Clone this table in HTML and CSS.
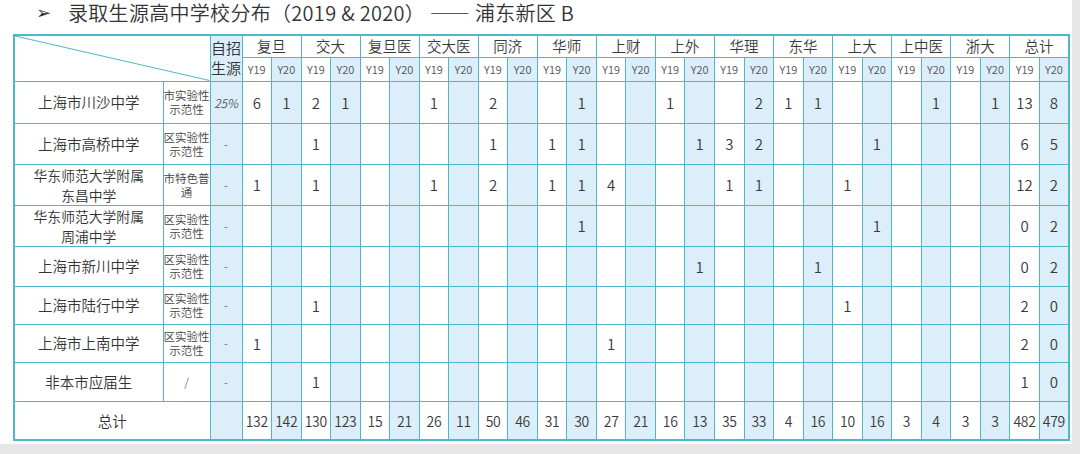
FILE: index.html
```html
<!DOCTYPE html>
<html lang="zh">
<head>
<meta charset="utf-8">
<link rel="stylesheet" href="styles.css">
</head>
<body>
<div class="slide">
  <div class="title"><span class="arrow">➢</span><span class="ttext">录取生源高中学校分布（2019 &amp; 2020） —— 浦东新区 B</span></div>
  <table class="grid">
    <colgroup>
      <col class="c-name"><col class="c-type"><col class="c-zz">
      <col class="c-y"><col class="c-y"><col class="c-y"><col class="c-y"><col class="c-y"><col class="c-y"><col class="c-y"><col class="c-y"><col class="c-y"><col class="c-y"><col class="c-y"><col class="c-y"><col class="c-y"><col class="c-y"><col class="c-y"><col class="c-y"><col class="c-y"><col class="c-y"><col class="c-y"><col class="c-y"><col class="c-y"><col class="c-y"><col class="c-y"><col class="c-y"><col class="c-y"><col class="c-y"><col class="c-y"><col class="c-y">
    </colgroup>
    <thead>
      <tr class="h1">
        <th class="corner" colspan="2" rowspan="2"><svg class="diag" viewBox="0 0 100 100" preserveAspectRatio="none"><line x1="0" y1="0" x2="100" y2="100" stroke="#4fb8c8" stroke-width="1" vector-effect="non-scaling-stroke"/></svg></th>
        <th class="zz zzh" rowspan="2">自招<br>生源</th>
        <th class="uni" colspan="2">复旦</th>
        <th class="uni" colspan="2">交大</th>
        <th class="uni" colspan="2">复旦医</th>
        <th class="uni" colspan="2">交大医</th>
        <th class="uni" colspan="2">同济</th>
        <th class="uni" colspan="2">华师</th>
        <th class="uni" colspan="2">上财</th>
        <th class="uni" colspan="2">上外</th>
        <th class="uni" colspan="2">华理</th>
        <th class="uni" colspan="2">东华</th>
        <th class="uni" colspan="2">上大</th>
        <th class="uni" colspan="2">上中医</th>
        <th class="uni" colspan="2">浙大</th>
        <th class="uni" colspan="2">总计</th>
      </tr>
      <tr class="h2" id="yrow"></tr>
    </thead>
    <tbody id="body"></tbody>
  </table>
</div>
<script src="app.js"></script>
</body>
</html>
```

FILE: app.js
```js
(function () {
  var yrow = document.getElementById('yrow');
  for (var i = 0; i < 14; i++) {
    var a = document.createElement('th'); a.className = 'yr'; a.textContent = 'Y19'; yrow.appendChild(a);
    var b = document.createElement('th'); b.className = 'yr alt'; b.textContent = 'Y20'; yrow.appendChild(b);
  }
  var rows = [
    { n: ['上海市川沙中学'], t: '市实验性<br>示范性', z: '25%', zi: true,
      v: { 0: '6', 1: '1', 2: '2', 3: '1', 6: '1', 8: '2', 11: '1', 14: '1', 17: '2', 18: '1', 19: '1', 23: '1', 25: '1', 26: '13', 27: '8' } },
    { n: ['上海市高桥中学'], t: '区实验性<br>示范性', z: '-',
      v: { 2: '1', 8: '1', 10: '1', 11: '1', 15: '1', 16: '3', 17: '2', 21: '1', 26: '6', 27: '5' } },
    { n: ['华东师范大学附属', '东昌中学'], t: '市特色普<br>通', z: '-',
      v: { 0: '1', 2: '1', 6: '1', 8: '2', 10: '1', 11: '1', 12: '4', 16: '1', 17: '1', 20: '1', 26: '12', 27: '2' } },
    { n: ['华东师范大学附属', '周浦中学'], t: '区实验性<br>示范性', z: '-',
      v: { 11: '1', 21: '1', 26: '0', 27: '2' } },
    { n: ['上海市新川中学'], t: '区实验性<br>示范性', z: '-',
      v: { 15: '1', 19: '1', 26: '0', 27: '2' } },
    { n: ['上海市陆行中学'], t: '区实验性<br>示范性', z: '-',
      v: { 2: '1', 20: '1', 26: '2', 27: '0' } },
    { n: ['上海市上南中学'], t: '区实验性<br>示范性', z: '-',
      v: { 0: '1', 12: '1', 26: '2', 27: '0' } },
    { n: ['非本市应届生'], t: '/', z: '-',
      v: { 2: '1', 26: '1', 27: '0' } }
  ];
  var body = document.getElementById('body');
  rows.forEach(function (r) {
    var tr = document.createElement('tr');
    tr.className = 'row';
    var nm = r.n.map(function (s) { return '<span class="nl">' + s + '</span>'; }).join('');
    var html = '<td class="name' + (r.n.length > 1 ? ' two' : '') + '">' + nm + '</td><td class="type' + (r.t === '/' ? ' slash' : '') + '">' + r.t + '</td>' +
      '<td class="zz' + (r.zi ? ' zzi' : ' zzd') + '">' + r.z + '</td>';
    for (var i = 0; i < 28; i++) {
      html += '<td class="num' + (i % 2 ? ' alt' : '') + '">' + (r.v[i] || '') + '</td>';
    }
    tr.innerHTML = html;
    body.appendChild(tr);
  });
  var totals = ['132','142','130','123','15','21','26','11','50','46','31','30','27','21','16','13','35','33','4','16','10','16','3','4','3','3','482','479'];
  var tr = document.createElement('tr');
  tr.className = 'row total';
  var html = '<td class="name" colspan="2">总计</td><td class="zz"></td>';
  totals.forEach(function (t, i) { html += '<td class="num' + (i % 2 ? ' alt' : '') + '">' + t + '</td>'; });
  tr.innerHTML = html;
  body.appendChild(tr);
  var hs = [42, 41, 41, 41, 40, 38, 38, 39, 39];
  var trs = body.querySelectorAll('tr');
  for (var k = 0; k < trs.length; k++) { trs[k].style.height = hs[k] + 'px'; }
})();
```

FILE: styles.css
```css
html, body {
  margin: 0;
  padding: 0;
}
body {
  width: 1080px;
  height: 454px;
  background: #e7e7e7;
  font-family: "Noto Sans CJK SC", "Noto Sans", sans-serif;
  font-weight: 350;
  color: #3a3a3a;
  overflow: hidden;
}
.slide {
  width: 1072px;
  height: 444px;
  background: #ffffff;
  padding-left: 13px;
  box-sizing: border-box;
}
.title {
  height: 34px;
  display: flex;
  align-items: flex-start;
  font-size: 20px;
  line-height: 26px;
  color: #333;
}
.arrow {
  margin-left: 23px;
  width: 32px;
  font-family: "DejaVu Sans", sans-serif;
  font-size: 18px;
  line-height: 26px;
  font-weight: normal;
}
.ttext {
  letter-spacing: 0.3px;
}
.grid {
  border-collapse: collapse;
  table-layout: fixed;
  width: 1056px;
  border: 2px solid #4fb8c8;
}
.c-name { width: 149px; }
.c-type { width: 47px; }
.c-zz { width: 32px; }
.c-y { width: 29.54px; }
.grid th, .grid td {
  border: 1px solid #4fb8c8;
  padding: 0;
  text-align: center;
  vertical-align: middle;
  font-weight: 350;
  overflow: hidden;
  white-space: nowrap;
}
.h1 { height: 22px; }
.h2 { height: 24px; }
.corner {
  position: relative;
}
.diag {
  position: absolute;
  left: 0;
  top: 0;
  width: 100%;
  height: 100%;
  display: block;
}
.uni {
  font-size: 14.5px;
  line-height: 18px;
  color: #3a3a3a;
}
.zz {
  background: #dbeef9;
}
.zzh {
  font-size: 15px;
  line-height: 20px;
  color: #333;
}
.yr {
  font-size: 11px;
  color: #555;
  line-height: 14px;
}
.alt {
  background: #dbeef9;
}
.name {
  font-size: 14.5px;
  line-height: 18px;
  color: #333;
}
.nl {
  display: block;
}
.name.two {
  font-size: 13.8px;
  line-height: 20.1px;
}
.type {
  font-size: 11.5px;
  line-height: 14px;
  color: #444;
}
.type.slash {
  font-size: 12px;
  color: #777;
}
.zzi {
  font-size: 12px;
  font-style: italic;
  color: #555;
}
.zzd {
  font-size: 11px;
  color: #666;
}
.num {
  font-size: 15px;
  color: #3a3a3a;
}
.total .num {
  font-size: 14px;
  letter-spacing: -0.3px;
}
.total .name {
  font-size: 14.5px;
}
```
